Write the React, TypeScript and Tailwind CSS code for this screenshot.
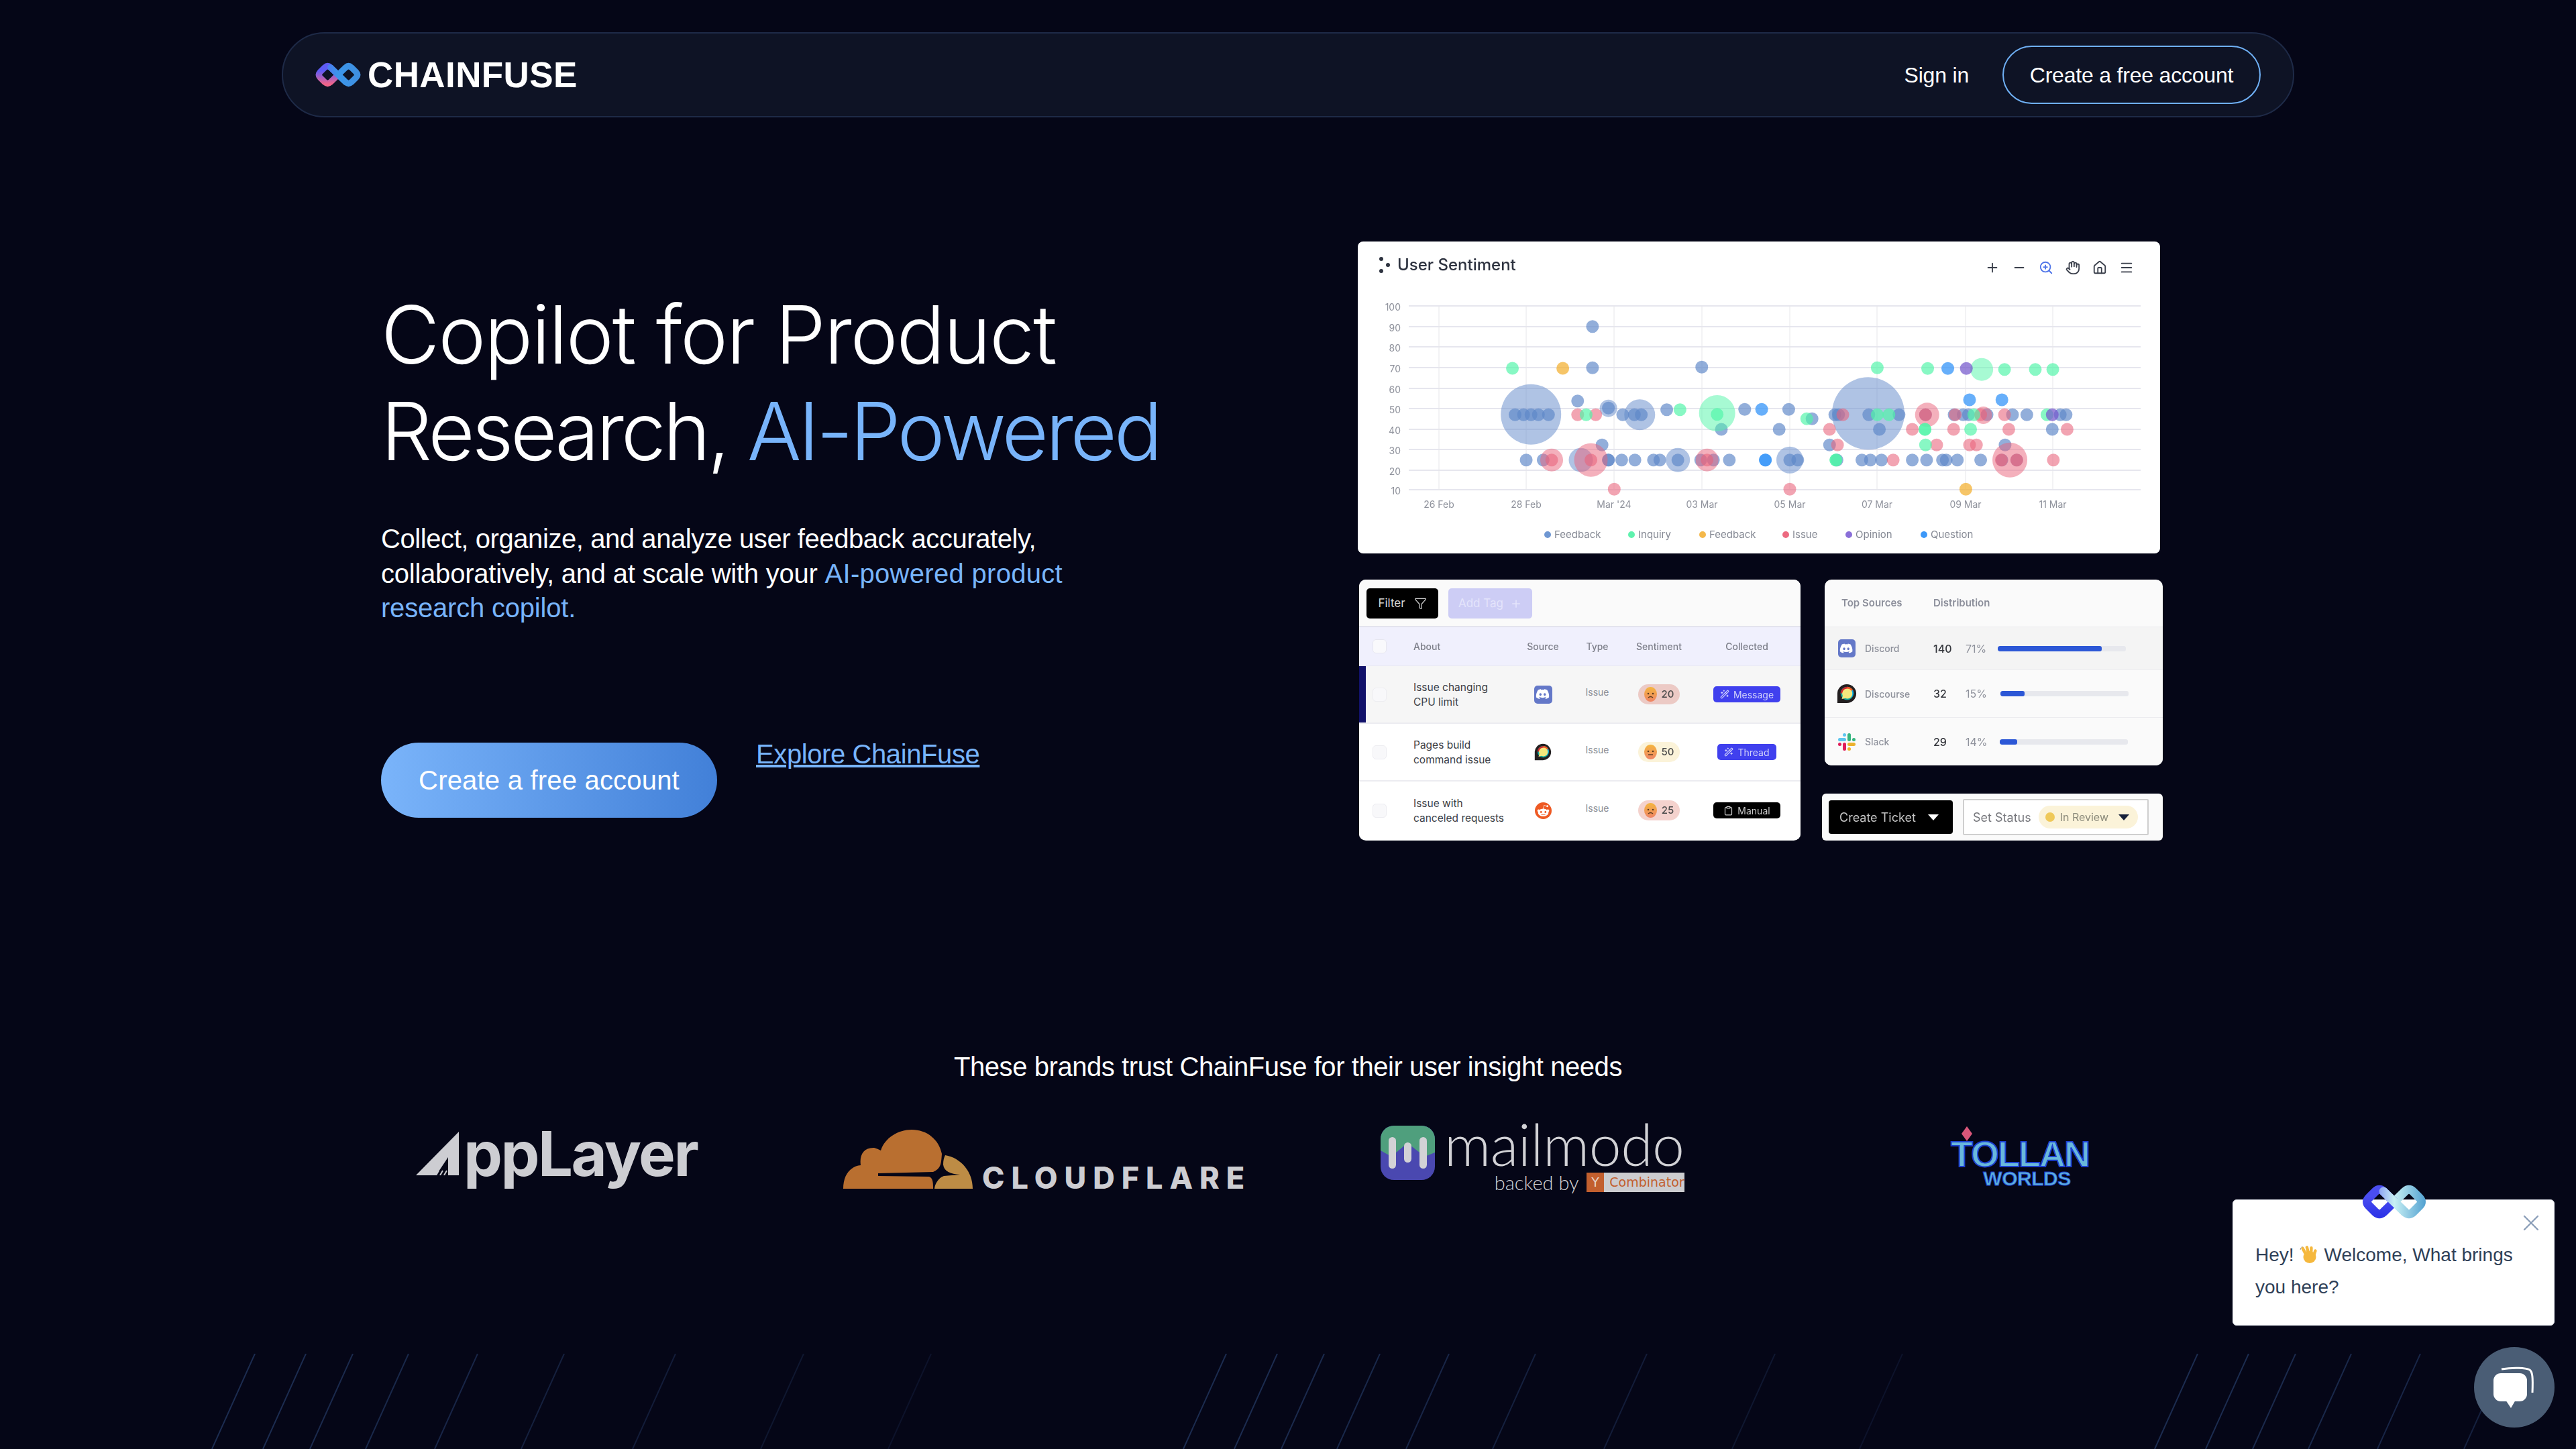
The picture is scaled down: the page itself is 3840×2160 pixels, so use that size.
import React from 'react';
import { Plus, Minus, ZoomIn, Hand, Home, Menu, Funnel, WandSparkles, Clipboard, X } from 'lucide-react';
import { FaDiscord, FaRedditAlien } from 'react-icons/fa';

// bubble positions were read off the screenshot, [x, y, radius]
type Bubble = [number, number, number?];

const toX = (zx: number) => zx / 1.265 - 24;
const toY = (zy: number) => zy / 3 - 20;

const series: { color: string; alpha: number; points: Bubble[] }[] = [
  {
    color: '#5f88c9',
    alpha: 0.68,
    points: [
      [357, 833, 45], [993, 829, 54], [562, 835, 23], [451, 1037, 18], [634, 1037, 18], [845, 1037, 20], [503, 806, 13],
      [473, 440], [473, 625], [679, 622], [327, 835], [343, 835], [357, 835], [371, 835], [390, 835], [445, 773], [503, 805],
      [530, 835], [552, 835], [565, 835], [613, 812], [760, 811], [843, 811], [716, 900], [825, 900], [887, 853], [920, 970],
      [491, 970], [348, 1037], [380, 1037], [503, 1037], [503, 1037], [528, 1037], [553, 1037], [588, 1037], [600, 1037],
      [634, 1037], [677, 1037], [701, 1037], [731, 1037], [845, 1037], [860, 1037], [934, 1037], [981, 1037], [997, 1037],
      [1018, 1037], [1076, 1037], [1103, 1037], [1133, 1037], [1140, 1037], [1161, 1037], [1205, 1037], [1245, 1037],
      [1273, 1037], [1251, 970], [930, 835], [937, 835], [994, 835], [1051, 835], [1101, 835], [1155, 835], [1172, 835],
      [1182, 835], [1217, 835], [1265, 835], [1292, 835], [1355, 835], [1366, 835], [1014, 900], [1340, 900],
    ],
  },
  {
    color: '#e9627a',
    alpha: 0.58,
    points: [
      [470, 1037, 25], [396, 1037, 17], [689, 1037, 17], [1104, 835, 18], [1260, 1037, 26], [1210, 837, 13], [445, 835], [479, 835],
      [396, 1037], [470, 1037], [689, 1037], [514, 1168], [845, 1168], [920, 900], [935, 970], [945, 835], [1076, 900], [1122, 970],
      [1101, 835], [1040, 1037], [1154, 900], [1184, 970], [1197, 970], [1157, 835], [1205, 835], [1250, 835], [1258, 900],
      [1368, 900], [1244, 1037], [1273, 1037], [1342, 1037],
    ],
  },
  {
    color: '#4ff5a8',
    alpha: 0.68,
    points: [
      [708, 828, 27], [1207, 632, 17], [322, 627], [1010, 625], [1105, 628], [1250, 632], [1308, 632], [1341, 632], [638, 812],
      [461, 835], [708, 833], [877, 853], [932, 1037], [932, 1037], [1010, 835], [1032, 835], [1100, 900], [1100, 900], [1186, 900],
      [1101, 970], [1192, 835], [1330, 835],
    ],
  },
  { color: '#f2ae2e', alpha: 0.72, points: [[417, 627], [1177, 1168]] },
  { color: '#7458cc', alpha: 0.72, points: [[1178, 628], [1340, 835]] },
  { color: '#3c98f8', alpha: 0.78, points: [[1143, 628], [792, 811], [799, 1037], [799, 1037], [1184, 768], [1245, 768]] },
];

const yLabels = [
  ['100', 456], ['90', 487], ['80', 517], ['70', 548], ['60', 579], ['50', 609], ['40', 640], ['30', 670], ['20', 701], ['10', 730],
] as const;
const xLabels = [
  ['26 Feb', 2145], ['28 Feb', 2275], ["Mar '24", 2406], ['03 Mar', 2537], ['05 Mar', 2668], ['07 Mar', 2798], ['09 Mar', 2930], ['11 Mar', 3060],
] as const;
const legend = [
  ['Feedback', 2307, '#6f97d2'], ['Inquiry', 2432, '#5ff2ae'], ['Feedback', 2538, '#f4b84a'], ['Issue', 2662, '#ec6a80'], ['Opinion', 2756, '#8a6fd8'], ['Question', 2868, '#3c98f8'],
] as const;

function SentimentChart() {
  return (
    <svg width="1196" height="465" viewBox="0 0 1196 465" className="absolute inset-0">
      {yLabels.map(([, y]) => (
        <line key={y} x1={76} x2={1167} y1={y - 360} y2={y - 360} stroke="#e6e6ee" strokeWidth="2" />
      ))}
      {xLabels.map(([, x]) => (
        <line key={x} x1={x - 2024} x2={x - 2024} y1={96} y2={370} stroke="#e6e6ea" strokeWidth="1" />
      ))}
      {yLabels.map(([t, y]) => (
        <text key={t} x={64} y={y - 353} textAnchor="end" fontSize="14" fill="#8f929c" fontFamily="Inter, sans-serif">{t}</text>
      ))}
      {xLabels.map(([t, x]) => (
        <text key={t} x={x - 2024} y={397} textAnchor="middle" fontSize="14" fill="#8f929c" fontFamily="Inter, sans-serif">{t}</text>
      ))}
      {series.map((s) =>
        s.points.map(([x, y, r], i) => (
          <circle key={s.color + i} cx={toX(x)} cy={toY(y)} r={r ?? 9.5} fill={s.color} opacity={r ? 0.5 : s.alpha} />
        )),
      )}
      {legend.map(([t, x, c]) => (
        <g key={x}>
          <circle cx={x - 2024} cy={437} r={5} fill={c} />
          <text x={x - 2024 + 10} y={442} fontSize="15" fill="#858994" fontFamily="Inter, sans-serif">{t}</text>
        </g>
      ))}
    </svg>
  );
}

function InfinityLogo({ id, w, h, stops }: { id: string; w: number; h: number; stops: string[] }) {
  return (
    <svg width={w} height={h} viewBox="0 0 96 55" fill="none">
      <defs>
        <linearGradient id={id} x1="0" y1="0" x2="96" y2="0" gradientUnits="userSpaceOnUse">
          <stop offset="0" stopColor={stops[0]} />
          <stop offset="0.5" stopColor={stops[1]} />
          <stop offset="1" stopColor={stops[2]} />
        </linearGradient>
        <linearGradient id={id + 'b'} x1="0" y1="0" x2="0" y2="55" gradientUnits="userSpaceOnUse">
          <stop offset="0.35" stopColor={stops[0]} />
          <stop offset="0.85" stopColor={stops[3]} />
        </linearGradient>
      </defs>
      <path d="M48 27.5 L64 12 Q70 6.5 76 12 L86 22 Q91 27.5 86 33 L76 43 Q70 48.5 64 43 Z" stroke={`url(#${id})`} strokeWidth="13" strokeLinejoin="round" />
      <path d="M48 27.5 L32 12 Q26 6.5 20 12 L10 22 Q5 27.5 10 33 L20 43 Q26 48.5 32 43 L48 27.5" stroke={`url(#${id}b)`} strokeWidth="13" strokeLinejoin="round" />
      <path d="M32 12 L64 43" stroke={`url(#${id})`} strokeWidth="13" strokeLinecap="round" />
    </svg>
  );
}

function DiscordIcon({ className }: { className: string }) {
  return (
    <div className={`flex items-center justify-center rounded-[5px] bg-[#6478c8] ${className}`}>
      <FaDiscord className="h-[78%] w-[78%] text-white" />
    </div>
  );
}

function DiscourseIcon({ size }: { size: number }) {
  return (
    <svg width={size} height={size} viewBox="0 0 32 32">
      <path d="M16 1a15 15 0 1 1 0 30H1V16A15 15 0 0 1 16 1Z" fill="#231f20" />
      <circle cx="16.5" cy="15.5" r="10.5" fill="#12a89d" />
      <path d="M6 15.5a10.5 10.5 0 0 1 20.5-3L16.5 15.5Z" fill="#d0232b" />
      <path d="M16.5 5a10.5 10.5 0 0 1 10 8l-6 5Z" fill="#f15d22" />
      <path d="M25.5 10a10.5 10.5 0 0 1-2 12l-6-5Z" fill="#00aeef" />
      <path d="M17 8a8 8 0 1 1-3.5 15.2L8 24.5l1.5-5A8 8 0 0 1 17 8Z" fill="#f3e87d" />
    </svg>
  );
}

function SlackIcon() {
  return (
    <svg width="26" height="26" viewBox="0 0 26 26">
      <rect x="0" y="7" width="12" height="5" rx="2.5" fill="#5ec6ee" />
      <rect x="7" y="0" width="5" height="5" rx="2.5" fill="#5ec6ee" />
      <rect x="14" y="0" width="5" height="12" rx="2.5" fill="#35b57e" />
      <rect x="21" y="7" width="5" height="5" rx="2.5" fill="#35b57e" />
      <rect x="14" y="14" width="12" height="5" rx="2.5" fill="#ecb22e" />
      <rect x="14" y="21" width="5" height="5" rx="2.5" fill="#ecb22e" />
      <rect x="7" y="14" width="5" height="12" rx="2.5" fill="#e01e5a" />
      <rect x="0" y="14" width="5" height="5" rx="2.5" fill="#e01e5a" />
    </svg>
  );
}

function RedditIcon() {
  return (
    <div className="flex h-[25px] w-[25px] items-center justify-center rounded-full bg-[#ee5a24]">
      <FaRedditAlien className="h-[19px] w-[19px] text-white" />
    </div>
  );
}

function Face({ sad }: { sad: boolean }) {
  return (
    <svg width="19" height="22" viewBox="0 0 19 22">
      <defs>
        <linearGradient id={sad ? 'faceSad' : 'faceFlat'} x1="0" y1="0" x2="0" y2="1">
          <stop offset="0" stopColor="#f4b63f" />
          <stop offset="1" stopColor="#ef8466" />
        </linearGradient>
      </defs>
      <ellipse cx="9.5" cy="11" rx="9.5" ry="11" fill={`url(#${sad ? 'faceSad' : 'faceFlat'})`} />
      <circle cx="6" cy="10" r="1.3" fill="#5b3a20" />
      <circle cx="13" cy="10" r="1.3" fill="#5b3a20" />
      {sad ? <path d="M6 16q3.5-3 7 0" stroke="#5b3a20" strokeWidth="1.4" fill="none" /> : <path d="M6 15h7" stroke="#5b3a20" strokeWidth="1.4" />}
    </svg>
  );
}

const feedbackRows = [
  { title: ['Issue changing', 'CPU limit'], icon: <DiscordIcon className="h-[27px] w-[27px]" />, score: 20, sad: true, pill: 'bg-[#eccac5]', badge: 'Message', active: true },
  { title: ['Pages build', 'command issue'], icon: <DiscourseIcon size={26} />, score: 50, sad: false, pill: 'bg-[#fbf3d9]', badge: 'Thread', active: false },
  { title: ['Issue with', 'canceled requests'], icon: <RedditIcon />, score: 25, sad: true, pill: 'bg-[#f4d2cd]', badge: 'Manual', active: false },
];

const gridCols = 'grid grid-cols-[81px_153px_80px_82px_102px_160px] items-center';

function FeedbackTable() {
  return (
    <div className="w-[658px] overflow-hidden rounded-[10px] bg-white font-['Inter',sans-serif] blur-[0.6px]">
      <div className="flex h-[71px] items-start gap-[15px] border-b-2 border-[#e3e3ee] bg-[#fafafa] pl-[11px] pt-[13px]">
        <div className="flex h-[45px] w-[107px] items-center justify-center gap-[13px] rounded-[5px] bg-black text-[17px] text-[#d8d8d8]">
          Filter <Funnel className="h-[19px] w-[19px]" strokeWidth={1.5} />
        </div>
        <div className="flex h-[45px] w-[125px] items-center justify-center gap-[10px] rounded-[5px] bg-[#cdcdf5] text-[17px] text-[#e4e4fb]">
          Add Tag <Plus className="h-[18px] w-[18px]" />
        </div>
      </div>
      <div className={`${gridCols} h-[58px] border-b border-[#e9e9f3] bg-[#f0f0fd] text-center text-[14px] font-medium text-[#7d7f8a]`}>
        <div className="ml-[20px] h-[21px] w-[21px] rounded-[5px] border border-[#e6e6ef] bg-[#f9f9fc]" />
        <div className="text-left">About</div>
        <div>Source</div>
        <div>Type</div>
        <div>Sentiment</div>
        <div>Collected</div>
      </div>
      {feedbackRows.map((row) => (
        <div key={row.badge} className={`${gridCols} relative h-[86px] border-b-2 border-[#ececf1] last:border-b-0 ${row.active ? 'bg-[#f6f6f6]' : 'bg-white'}`}>
          {row.active && <div className="absolute inset-y-0 left-0 w-[10px] bg-[#12126a]" />}
          <div className="ml-[20px] h-[21px] w-[21px] rounded-[5px] border border-[#ededf1] bg-[#f8f8fa]" />
          <div className="mt-[2px] text-[15.5px] leading-[22px] text-[#3b3e46]">
            <div>{row.title[0]}</div>
            <div>{row.title[1]}</div>
          </div>
          <div className="flex justify-center">{row.icon}</div>
          <div className="-mt-[8px] text-center text-[14px] text-[#8a8e96]">Issue</div>
          <div className="flex justify-center">
            <div className={`flex h-[30px] w-[62px] items-center justify-center gap-[7px] rounded-full text-[15px] font-medium text-[#4a4a4a] ${row.pill}`}>
              <Face sad={row.sad} /> {row.score}
            </div>
          </div>
          <div className="flex justify-center">
            {row.badge === 'Manual' ? (
              <div className="flex h-[24px] w-[100px] items-center justify-center gap-[6px] rounded-[5px] bg-black text-[14px] text-[#c9c9c9]">
                <Clipboard className="h-[15px] w-[15px]" /> Manual
              </div>
            ) : (
              <div className={`flex h-[24px] items-center justify-center gap-[6px] rounded-[5px] bg-[#4040ee] text-[14px] text-[#cfd0fb] ${row.badge === 'Message' ? 'w-[100px]' : 'w-[88px]'}`}>
                <WandSparkles className="h-[14px] w-[14px]" /> {row.badge}
              </div>
            )}
          </div>
        </div>
      ))}
    </div>
  );
}

const sourceRows = [
  { name: 'Discord', icon: <DiscordIcon className="h-[27px] w-[26px]" />, count: 140, pct: '71%', rowClass: 'h-[64px] bg-[#f4f4f4]', pctClass: 'w-[48px]', fill: 'w-[155px]' },
  { name: 'Discourse', icon: <DiscourseIcon size={30} />, count: 32, pct: '15%', rowClass: 'h-[71px] bg-[#fafafa]', pctClass: 'w-[52px]', fill: 'w-[36px]' },
  { name: 'Slack', icon: <SlackIcon />, count: 29, pct: '14%', rowClass: 'h-[71px] bg-[#fafafa]', pctClass: 'w-[51px]', fill: 'w-[26px]' },
];

function TopSources() {
  return (
    <div className="w-[504px] overflow-hidden rounded-[10px] bg-[#fafafa] font-['Inter',sans-serif] blur-[0.5px]">
      <div className="flex h-[71px] items-center border-b border-[#ececef] text-[15px] font-semibold text-[#8b8e9a]">
        <div className="w-[162px] pl-[25px]">Top Sources</div>
        <div>Distribution</div>
      </div>
      {sourceRows.map((row) => (
        <div key={row.name} className={`flex items-center border-b border-[#ececef] last:border-b-0 ${row.rowClass}`}>
          <div className="flex w-[60px] justify-center pl-[5px]">{row.icon}</div>
          <div className="w-[102px] text-[14px] font-medium text-[#8f929c]">{row.name}</div>
          <div className="w-[48px] text-[16px] font-medium text-[#35373d]">{row.count}</div>
          <div className={`text-[16px] text-[#8f929c] ${row.pctClass}`}>{row.pct}</div>
          <div className="h-[8px] w-[191px] overflow-hidden rounded-[3px] bg-[#e7e8ed]">
            <div className={`h-full rounded-[3px] bg-[#2c57d6] ${row.fill}`} />
          </div>
        </div>
      ))}
    </div>
  );
}

function TicketBar() {
  return (
    <div className="ml-[-4px] flex h-[70px] w-[508px] items-center gap-[15px] rounded-[6px] bg-[#fafafa] pl-[10px] font-['Inter',sans-serif] blur-[0.5px]">
      <div className="flex h-[50px] w-[185px] items-center gap-[18px] rounded-[4px] bg-black pl-[16px] text-[18px] text-[#c4c4c4]">
        Create Ticket
        <svg width="16" height="9" viewBox="0 0 16 9"><path d="M0 0h16L8 9Z" fill="#fff" /></svg>
      </div>
      <div className="flex h-[54px] w-[277px] items-center gap-[11px] rounded-[2px] border-2 border-[#cfcfcf] bg-white pl-[13px] text-[18px] text-[#77787d]">
        Set Status
        <div className="flex h-[34px] w-[148px] items-center rounded-full bg-[#fbf3d9] pl-[10px] text-[16px] text-[#8d8c7c]">
          <span className="h-[14px] w-[14px] rounded-full bg-[#efc95a]" />
          <span className="ml-[8px]">In Review</span>
          <svg className="ml-[15px]" width="16" height="9" viewBox="0 0 16 9"><path d="M0 0h16L8 9Z" fill="#16203a" /></svg>
        </div>
      </div>
    </div>
  );
}

function BrandLogos() {
  return (
    <div className="mt-[64px] flex h-[100px] items-start">
      {/* AppLayer */}
      <div className="ml-[620px] mt-[9px] flex w-[416px] items-start text-[#cdcdd2]">
        <svg width="66" height="65" viewBox="0 0 66 65" className="shrink-0">
          <path d="M0 65 64 0v65H48V38L30 65Z" fill="#cdcdd2" />
          <path d="M30 65 34 58M36 65 40 58M42 65 46 58" stroke="#cdcdd2" strokeWidth="2" />
        </svg>
        <span className="ml-[5px] -mt-[22px] font-['Inter',sans-serif] text-[92px] font-bold leading-[110px] tracking-[-2.5px]">ppLayer</span>
      </div>
      {/* Cloudflare */}
      <div className="ml-[221px] mt-[6px] flex h-[88px] w-[601px] items-end">
        <svg width="193" height="88" viewBox="0 0 193 88" className="shrink-0">
          <path d="M0 88C0 70 8 55 26 53 24 38 30 27 45 27c2 0 7 2 11 4C62 12 82 0 102 0c23 0 41 15 45 36-1 14-1 22-13 27l-82 2v4l76 1c6 2 6 10 6 18Z" fill="#b96f30" />
          <path d="M152 38c23 4 41 24 41 50h-57c1-8 6-16 14-19l24-2c-14-1-24-5-25-15 0-6 1-10 3-14Z" fill="#bd8c45" />
        </svg>
        <span className="ml-[14px] whitespace-nowrap font-['Inter',sans-serif] text-[45px] font-extrabold leading-[33px] tracking-[10px] text-[#cdcdd2]">CLOUDFLARE</span>
      </div>
      {/* Mailmodo */}
      <div className="ml-[200px] flex w-[451px] items-start text-[#d2d2d6]">
        <svg width="81" height="81" viewBox="0 0 81 81" className="shrink-0">
          <defs>
            <clipPath id="mmClip"><rect width="81" height="81" rx="20" /></clipPath>
          </defs>
          <g clipPath="url(#mmClip)">
            <rect width="81" height="81" fill="#4a48b0" />
            <path d="M0 0h81v40L66 46 40 26 16 46 0 37Z" fill="#4f9f7d" />
          </g>
          <rect x="12" y="17" width="11" height="47" rx="5.5" fill="#d2d2d6" />
          <rect x="35" y="25" width="11" height="30" rx="5.5" fill="#d2d2d6" />
          <rect x="58" y="17" width="11" height="47" rx="5.5" fill="#d2d2d6" />
        </svg>
        <div className="ml-[14px] flex flex-col items-end">
          <span className="font-['Lato',sans-serif] text-[86px] font-light leading-[54px] tracking-[-0.5px]">mailmodo</span>
          <div className="mt-[16px] flex items-center">
            <span className="font-['Lato',sans-serif] text-[29px] font-light leading-[29px]">backed by</span>
            <div className="ml-[11px] flex h-[29px] w-[146px] items-stretch bg-[#cccccf] font-['DejaVu_Sans',sans-serif] text-[19px] leading-[29px]">
              <span className="w-[29px] bg-[#c25f2e] text-center text-[#e8d5c8]">Y</span>
              <span className="pl-[8px] text-[#c25f2e]">Combinator</span>
            </div>
          </div>
        </div>
      </div>
      {/* Tollan Worlds */}
      <div className="relative ml-[399px] h-[90px] w-[205px] font-bold">
        <svg width="16" height="22" viewBox="0 0 16 22" className="absolute left-[16px] top-[1px]"><path d="M8 0l8 11-8 11-8-11Z" fill="#d9567a" /></svg>
        <div className="absolute left-0 top-[19px] w-full text-center font-['Liberation_Sans',sans-serif] text-[54px] leading-[46px] tracking-[-2px] text-[#69b8dc] [-webkit-text-stroke:2px_#1b3fd0]">TOLLAN</div>
        <div className="absolute left-[11px] top-[67px] w-full text-center font-['Liberation_Sans',sans-serif] text-[30px] leading-[24px] tracking-[-0.5px] text-[#5bb0dc] [-webkit-text-stroke:1px_#1b3fd0]">WORLDS</div>
      </div>
    </div>
  );
}

const lineOffsets = [0, 76, 146, 229, 332, 461, 627, 818, 1008];
const lineFade = [1, 1, 0.95, 0.9, 0.85, 0.7, 0.6, 0.45, 0.35];

function BackgroundLines() {
  return (
    <svg width="3840" height="142" viewBox="0 0 3840 142" className="pointer-events-none absolute bottom-0 left-0" fill="none">
      {[380, 1828, 3276].map((start) =>
        lineOffsets.map((off, i) => (
          <line key={start + off} x1={start + off} y1={0} x2={start + off - 64} y2={142} stroke="#1c2c50" strokeWidth="2" opacity={lineFade[i]} />
        )),
      )}
    </svg>
  );
}

function WaveEmoji() {
  return (
    <svg width="29" height="29" viewBox="0 0 29 29" className="mx-[8px] inline-block align-[-5px]">
      <g fill="#f5b83d">
        <rect x="5" y="2" width="4.5" height="15" rx="2.2" transform="rotate(-28 7 10)" />
        <rect x="10" y="1" width="4.5" height="15" rx="2.2" transform="rotate(-14 12 9)" />
        <rect x="15" y="2" width="4.5" height="14" rx="2.2" transform="rotate(2 17 9)" />
        <rect x="20" y="6" width="4.5" height="12" rx="2.2" transform="rotate(18 22 12)" />
        <ellipse cx="15" cy="18" rx="9.5" ry="9" />
      </g>
      <path d="M2 4 1 7M4 2 3 4" stroke="#9a9a9a" strokeWidth="1" />
    </svg>
  );
}

function ChatWidget() {
  return (
    <>
      <div className="absolute left-[3328px] top-[1788px] h-[188px] w-[480px] rounded-[6px] border border-[#e6e9f0] bg-white pl-[33px] pt-[58px] text-[28px] leading-[48px] text-[#2f4057]">
        <div className="absolute left-[192px] top-[-25px]">
          <InfinityLogo id="chatLogo" w={96} h={55} stops={['#4a4df0', '#c8f0f4', '#4f9fd0', '#2f35e8']} />
        </div>
        <X className="absolute right-[14px] top-[14px] h-[40px] w-[40px] text-[#8a9db8]" strokeWidth={1.4} />
        <div className="w-[400px]">
          Hey!<WaveEmoji />Welcome, What brings you here?
        </div>
      </div>
      <div className="absolute left-[3688px] top-[2008px] flex h-[120px] w-[120px] items-center justify-center rounded-full bg-[#4a5d75]">
        <svg width="62" height="62" viewBox="0 0 62 62">
          <path d="M12 4C30 1 48 2 54 5c4 3 5 10 4 34" stroke="#fff" strokeWidth="3" fill="none" />
          <rect x="0" y="10" width="50" height="42" rx="11" fill="#fff" />
          <path d="M18 50h15l-7 12Z" fill="#fff" />
        </svg>
      </div>
    </>
  );
}

export default function App() {
  return (
    <div className="relative flex h-[2160px] w-full flex-col overflow-hidden bg-[#050617] font-['Liberation_Sans',sans-serif] text-white">
      <BackgroundLines />

      <header className="mx-[420px] mt-[48px] flex h-[127px] items-center justify-between rounded-[64px] border-2 border-[#1e2a47] bg-[#0e1325] pl-[48px] pr-[48px]">
        <div className="flex items-center gap-[10px]">
          <InfinityLogo id="navLogo" w={68} h={39} stops={['#5f5bf5', '#3b96ea', '#3f8fe0', '#f0648a']} />
          <span className="text-[53px] font-bold leading-none tracking-[0.4px]">CHAINFUSE</span>
        </div>
        <div className="flex items-center gap-[50px] text-[32px] tracking-[-0.2px]">
          <span>Sign in</span>
          <div className="flex h-[87px] w-[385px] items-center justify-center rounded-full border-2 border-[#6fb0f5]">Create a free account</div>
        </div>
      </header>

      <main className="mt-[185px] flex pl-[568px]">
        <section className="w-[1456px] pt-[67px]">
          <h1 className="font-['Inter',sans-serif] text-[120px] font-[350] leading-[144px]">
            <span className="tracking-[-2.2px]">Copilot for Product</span>
            <br />
            <span className="tracking-[-4.35px]">
              Research, <span className="text-[#78b4fb]">AI-Powered</span>
            </span>
          </h1>
          <p className="mt-[63px] w-[1100px] text-[40px] leading-[51.6px]">
            <span className="tracking-[-0.42px]">Collect, organize, and analyze user feedback accurately,</span>
            <br />
            <span className="tracking-[-0.23px]">collaboratively, and at scale with your </span>
            <span className="tracking-[0.3px] text-[#78b4fb]">AI-powered product</span>
            <br />
            <span className="tracking-[-0.2px] text-[#78b4fb]">research copilot.</span>
          </p>
          <div className="mt-[174px] flex items-start">
            <div className="flex h-[112px] w-[501px] items-center justify-center rounded-full bg-gradient-to-r from-[#7ab4fa] to-[#4280d8] text-[40px] tracking-[0.2px]">Create a free account</div>
            <span className="ml-[58px] -mt-[7px] text-[40px] leading-[48px] tracking-[-0.4px] text-[#78b4fb] underline">Explore ChainFuse</span>
          </div>
        </section>

        <section className="flex w-[1200px] flex-col">
          <div className="relative h-[465px] w-[1196px] rounded-[8px] bg-white font-['Inter',sans-serif] blur-[0.6px]">
            <SentimentChart />
            <div className="absolute left-[32px] top-[20px] flex items-center gap-[11px]">
              <svg width="16" height="24" viewBox="0 0 16 24"><circle cx="3" cy="3" r="3" fill="#2e3340" /><circle cx="3" cy="21" r="3" fill="#2e3340" /><circle cx="13" cy="12" r="3" fill="#2e3340" /></svg>
              <span className="text-[24px] font-medium leading-[30px] text-[#2e3340]">User Sentiment</span>
            </div>
            <div className="absolute left-[935px] top-[28px] flex gap-[18px] text-[#3a3f4b]">
              <Plus className="h-[22px] w-[22px]" />
              <Minus className="h-[22px] w-[22px]" />
              <ZoomIn className="h-[22px] w-[22px] text-[#4f74e8]" />
              <Hand className="h-[22px] w-[22px]" />
              <Home className="h-[22px] w-[22px]" />
              <Menu className="h-[22px] w-[22px]" />
            </div>
          </div>
          <div className="ml-[2px] mt-[39px] flex gap-[36px]">
            <FeedbackTable />
            <div className="flex flex-col gap-[42px]">
              <TopSources />
              <TicketBar />
            </div>
          </div>
        </section>
      </main>

      <p className="mt-[313px] text-center text-[40px] leading-[48px] tracking-[-0.43px]">These brands trust ChainFuse for their user insight needs</p>
      <BrandLogos />
      <ChatWidget />
    </div>
  );
}
